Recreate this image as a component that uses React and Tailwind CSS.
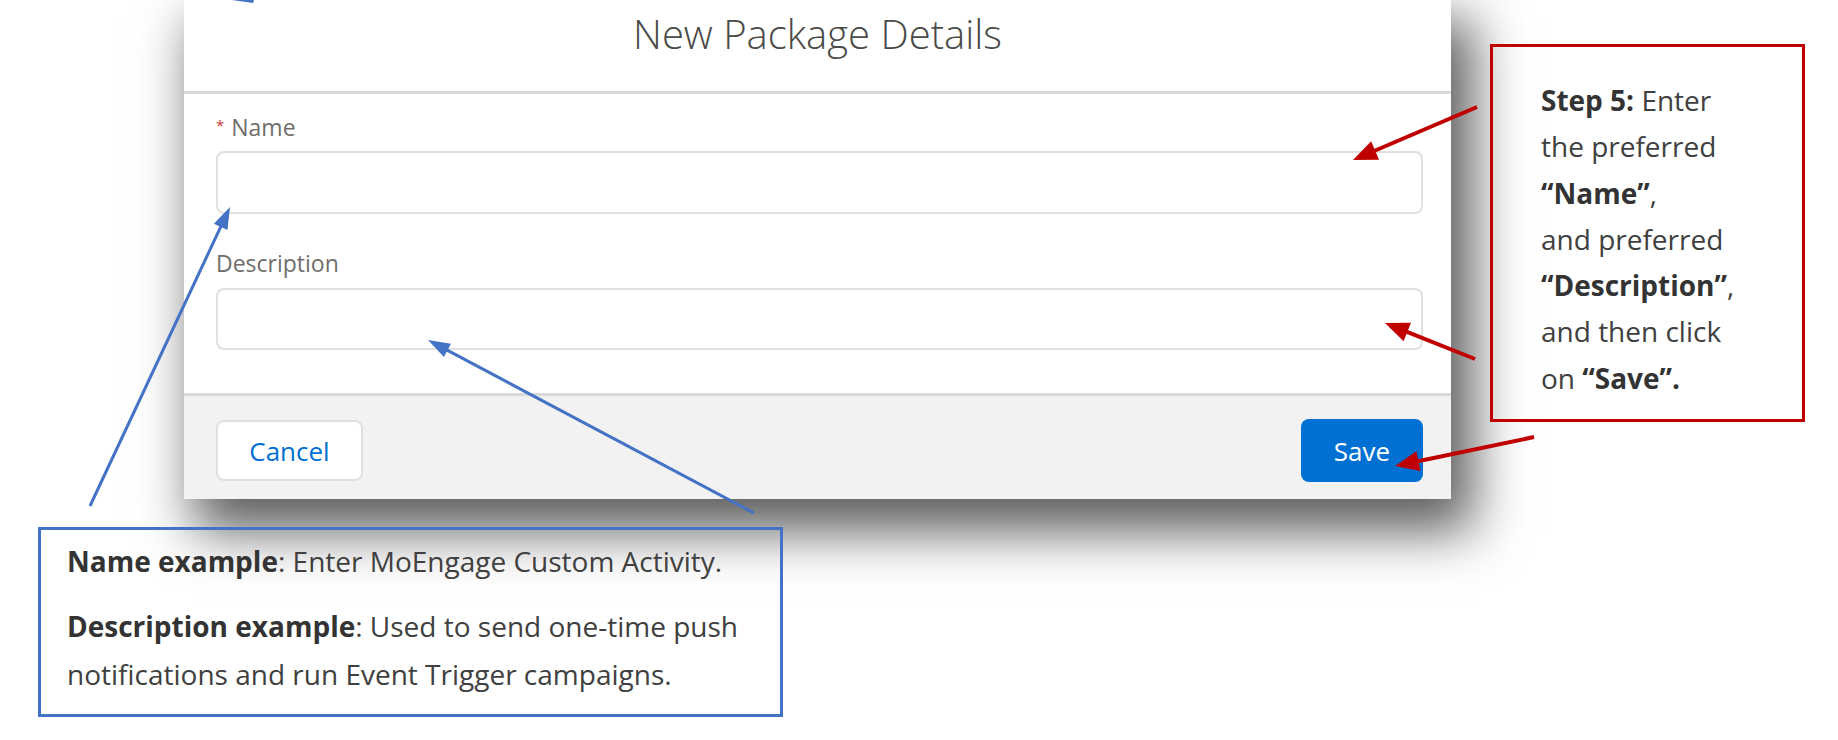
import React from "react";

function Arrow({ x1, y1, x2, y2, color, w, hl, hw }) {
  const dx = x2 - x1;
  const dy = y2 - y1;
  const L = Math.hypot(dx, dy);
  const ux = dx / L;
  const uy = dy / L;
  const bx = x2 - ux * hl;
  const by = y2 - uy * hl;
  const px = -uy;
  const py = ux;
  const pts = `${x2},${y2} ${bx + (px * hw) / 2},${by + (py * hw) / 2} ${bx - (px * hw) / 2},${by - (py * hw) / 2}`;
  return (
    <g>
      <line x1={x1} y1={y1} x2={bx + ux * 3} y2={by + uy * 3} stroke={color} strokeWidth={w} />
      <polygon points={pts} fill={color} />
    </g>
  );
}

export default function App() {
  const ui = { fontFamily: '"Open Sans", "Noto Sans", Arial, sans-serif' };
  const note = { fontFamily: '"Open Sans", "Noto Sans", Arial, sans-serif' };
  return (
    <div className="relative h-[740px] w-[1838px] overflow-hidden bg-white" style={ui}>
      {/* Modal */}
      <div className="ml-[184px] w-[1267px] bg-white shadow-[16px_26px_50px_6px_rgba(0,0,0,0.64)]">
        <div className="flex h-[94px] justify-center border-b-[3px] border-[#d9d9d9] pt-[14px]">
          <h2 className="text-[40px] font-light leading-none text-[#4a4a48]">New Package Details</h2>
        </div>
        <div className="pl-[32px] pr-[28px] pt-[22px] pb-[43px]">
          <label className="flex items-start text-[23px] leading-none text-[#706e6b]">
            <span className="mr-[7px] mt-[2px] text-[15px] leading-none text-[#c23934]">*</span>
            Name
          </label>
          <div className="mt-[12px] h-[63px] rounded-[8px] border-2 border-[#e1e0df] bg-white"></div>
          <label className="mt-[38px] block text-[23px] leading-none text-[#706e6b]">Description</label>
          <div className="mt-[13px] h-[62px] rounded-[8px] border-2 border-[#e1e0df] bg-white"></div>
        </div>
        <div className="flex h-[106px] items-start justify-between border-t-[3px] border-[#d9d9d9] bg-[#f3f2f2] pl-[32px] pr-[28px] pt-[24px]">
          <button className="flex h-[61px] w-[147px] items-center justify-center rounded-[8px] border-2 border-[#e1e0df] bg-white text-[26px] leading-none text-[#0070d2]">
            Cancel
          </button>
          <button className="-mt-[1px] flex h-[63px] w-[122px] items-center justify-center rounded-[8px] bg-[#0070d2] text-[26px] leading-none text-white">
            Save
          </button>
        </div>
      </div>

      {/* Red callout */}
      <div
        className="absolute left-[1490px] top-[44px] w-[315px] whitespace-nowrap border-[3px] border-[#c00000] pl-[48px] pt-[30px] pb-[18px] text-[28px] leading-[46.3px] text-[#404040]"
        style={note}
      >
        <div><b className="text-[#333]">Step 5:</b> Enter</div>
        <div>the preferred</div>
        <div><b className="text-[#333]">“Name”</b>,</div>
        <div>and preferred</div>
        <div><b className="text-[#333]">“Description”</b>,</div>
        <div>and then click</div>
        <div>on <b className="text-[#333]">“Save”.</b></div>
      </div>

      {/* Blue callout */}
      <div
        className="absolute left-[38px] top-[527px] h-[190px] w-[745px] whitespace-nowrap border-[3px] border-[#4472c4] pl-[26px] pt-[7px] text-[28px] leading-[48px] text-[#404040]"
        style={note}
      >
        <div><b className="text-[#333]">Name example</b>: Enter MoEngage Custom Activity.</div>
        <div className="mt-[17px]"><b className="text-[#333]">Description example</b>: Used to send one-time push</div>
        <div>notifications and run Event Trigger campaigns.</div>
      </div>

      {/* Arrows */}
      <svg className="pointer-events-none absolute left-0 top-0" width="1838" height="740" viewBox="0 0 1838 740">
        <polygon points="232,0 254,0 253,3" fill="#4472c4" />
        <Arrow x1={90} y1={506} x2={230} y2={207} color="#4472c4" w={3} hl={22} hw={15} />
        <Arrow x1={754} y1={513} x2={428} y2={340} color="#4472c4" w={3} hl={22} hw={15} />
        <Arrow x1={1477} y1={107} x2={1353} y2={160} color="#c00000" w={4} hl={24} hw={20} />
        <Arrow x1={1475} y1={359} x2={1385} y2={323} color="#c00000" w={4} hl={24} hw={20} />
        <Arrow x1={1534} y1={437} x2={1395} y2={466} color="#c00000" w={4} hl={24} hw={20} />
      </svg>
    </div>
  );
}
